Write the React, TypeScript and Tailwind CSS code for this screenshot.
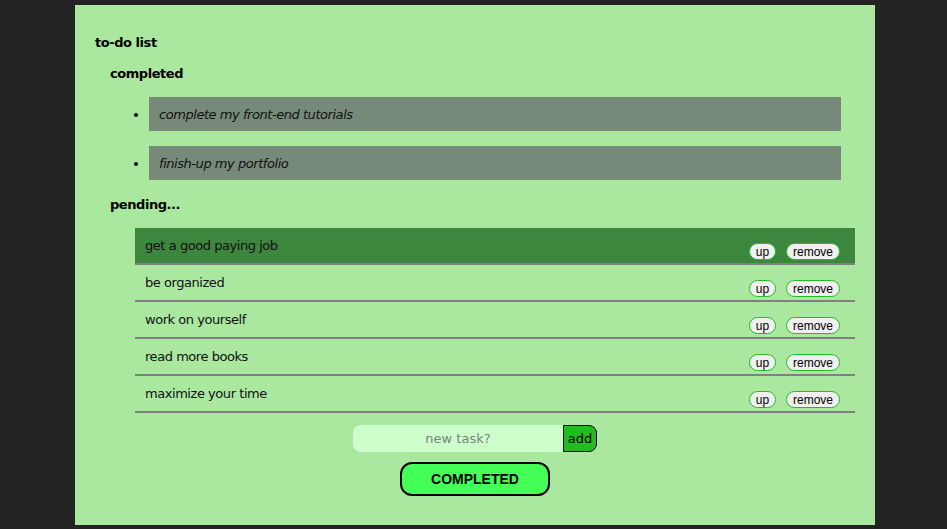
import React from "react";

const completed = ["complete my front-end tutorials", "finish-up my portfolio"];
const pending = [
  "get a good paying job",
  "be organized",
  "work on yourself",
  "read more books",
  "maximize your time",
];

export default function App() {
  return (
    <div className="min-h-[529px] w-full bg-[#232323] pt-[5px] pb-[4px]" style={{ fontFamily: '"DejaVu Sans", Verdana, sans-serif' }}>
      <div className="ml-[75px] h-[520px] w-[800px] bg-[#aae8a0] pl-[20px] pt-[30px] text-[13px] tracking-[-0.45px] text-black">
        <div className="h-[16px] font-bold leading-[16px]">to-do list</div>
        <div className="mt-[15px] h-[16px] pl-[15px] font-bold leading-[16px]">completed</div>
        <ul className="mt-[15px] list-disc pl-[54px]">
          {completed.map((t) => (
            <li key={t} className="mb-[15px] mr-[34px] marker:text-black">
              <div className="flex h-[34px] items-center bg-[#778a7a] pl-[10px] pt-[1px] italic text-[#111]">{t}</div>
            </li>
          ))}
        </ul>
        <div className="mt-[17px] h-[16px] pl-[15px] font-bold leading-[16px]">pending...</div>
        <ul className="mt-[15px] ml-[40px] mr-[20px]">
          {pending.map((t, i) => (
            <li
              key={t}
              className={`flex h-[37px] justify-between border-b-2 border-[#808080] ${i === 0 ? "bg-[#3d863d]" : ""}`}
            >
              <span className="pl-[10px] pt-[10px] leading-[15px] text-[#111]">{t}</span>
              <div className="mb-[3px] mr-[15px] flex gap-[10px] self-end tracking-normal" style={{ fontFamily: '"Liberation Sans", Arial, sans-serif' }}>
                <button className="h-[17px] w-[27px] rounded-full border border-[#22bb22] bg-[#f0f0f0] text-[12px] leading-[14px] text-black">up</button>
                <button className="h-[17px] w-[54px] rounded-full border border-[#22bb22] bg-[#f0f0f0] text-[12px] leading-[14px] text-black">remove</button>
              </div>
            </li>
          ))}
        </ul>
        <div className="mr-[20px] mt-[12px] flex justify-center tracking-normal">
          <input
            placeholder="new task?"
            className="h-[27px] w-[210px] rounded-l-[8px] bg-[#ccffcc] text-center text-[13px] outline-none placeholder:text-[#808080]"
          />
          <button className="h-[27px] w-[34px] rounded-r-[8px] border border-black bg-[#22bb22] text-[13px] text-black">add</button>
        </div>
        <div className="mr-[20px] mt-[10px] flex justify-center tracking-normal">
          <button
            className="h-[34px] w-[150px] rounded-[12px] border-2 border-black bg-[#44ff55] text-[14px] font-bold text-black"
            style={{ fontFamily: '"Liberation Sans", Arial, sans-serif' }}
          >
            COMPLETED
          </button>
        </div>
      </div>
    </div>
  );
}
